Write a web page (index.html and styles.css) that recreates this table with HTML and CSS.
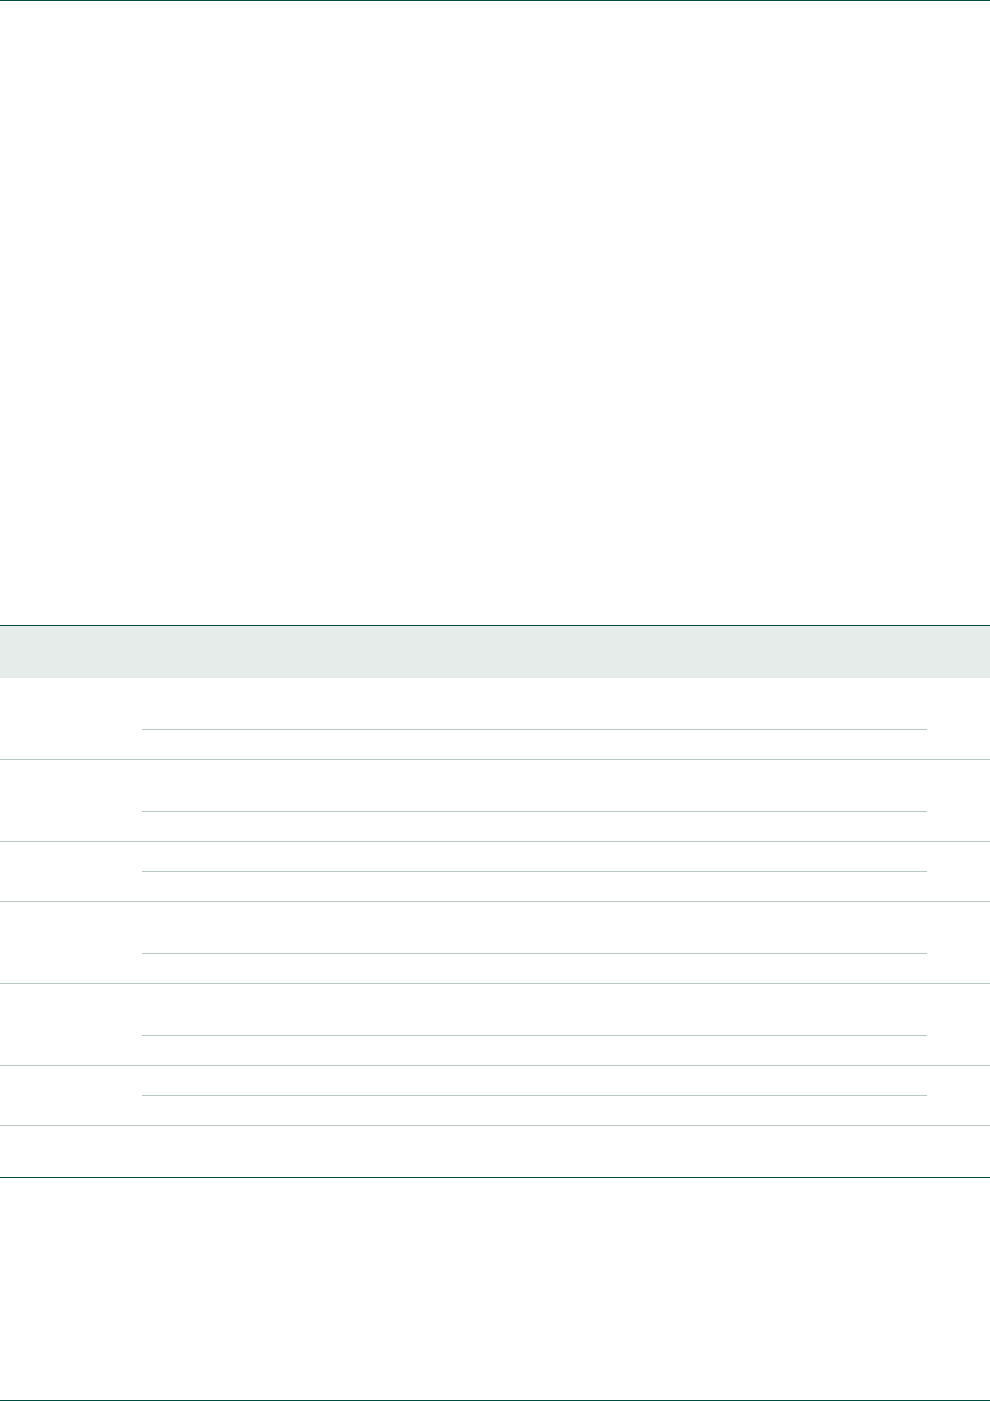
FILE: index.html
```html
<!DOCTYPE html>
<html lang="en">
<head>
  <meta charset="UTF-8">
  <meta name="viewport" content="width=device-width, initial-scale=1.0">
  <title>Table</title>
  <link rel="stylesheet" href="styles.css">
</head>

<body>

  <!-- Page frame -->
  <div class="page">

    <!-- Blank area above the table -->
    <div class="intro"></div>

    <!-- Table -->
    <div class="table">
      <div class="table-head"></div>

      <div class="table-row">
        <div class="cell-left"></div>
        <div class="cell-mid">
          <div class="sub tall"></div>
          <div class="sub short"></div>
        </div>
        <div class="cell-right"></div>
      </div>

      <div class="table-row">
        <div class="cell-left"></div>
        <div class="cell-mid">
          <div class="sub tall"></div>
          <div class="sub short"></div>
        </div>
        <div class="cell-right"></div>
      </div>

      <div class="table-row">
        <div class="cell-left"></div>
        <div class="cell-mid">
          <div class="sub short"></div>
          <div class="sub short"></div>
        </div>
        <div class="cell-right"></div>
      </div>

      <div class="table-row">
        <div class="cell-left"></div>
        <div class="cell-mid">
          <div class="sub tall"></div>
          <div class="sub short"></div>
        </div>
        <div class="cell-right"></div>
      </div>

      <div class="table-row">
        <div class="cell-left"></div>
        <div class="cell-mid">
          <div class="sub tall"></div>
          <div class="sub short"></div>
        </div>
        <div class="cell-right"></div>
      </div>

      <div class="table-row">
        <div class="cell-left"></div>
        <div class="cell-mid">
          <div class="sub short"></div>
          <div class="sub short"></div>
        </div>
        <div class="cell-right"></div>
      </div>

      <div class="table-row last">
        <div class="cell-left"></div>
        <div class="cell-mid">
          <div class="sub tall"></div>
        </div>
        <div class="cell-right"></div>
      </div>
    </div>

  </div>

</body>
</html>
```

FILE: styles.css
```css
/* Global Styles */
body {
  font-family: 'Liberation Sans', Arial, sans-serif;
  margin: 0;
  padding: 0;
  background-color: #fff;
}

/* Page frame */
.page {
  height: 1401px;
  box-sizing: border-box;
  border-top: 1px solid #004d3f;
  border-bottom: 1px solid #004d3f;
}

.intro {
  height: 624px;
}

/* Table Styles */
.table {
  border-top: 1px solid #004d3f;
  border-bottom: 1px solid #004d3f;
}

.table-head {
  height: 52px;
  background-color: #e6ecea;
}

.table-row {
  display: flex;
  border-bottom: 1px solid #bcc6c2;
}

.table-row.last {
  border-bottom: none;
}

.cell-left {
  width: 142px;
}

.cell-mid {
  width: 785px;
}

.cell-right {
  flex: 1;
}

.sub.tall {
  height: 51px;
}

.sub.short {
  height: 29px;
}

.sub + .sub {
  border-top: 1px solid #bcc6c2;
}
```
